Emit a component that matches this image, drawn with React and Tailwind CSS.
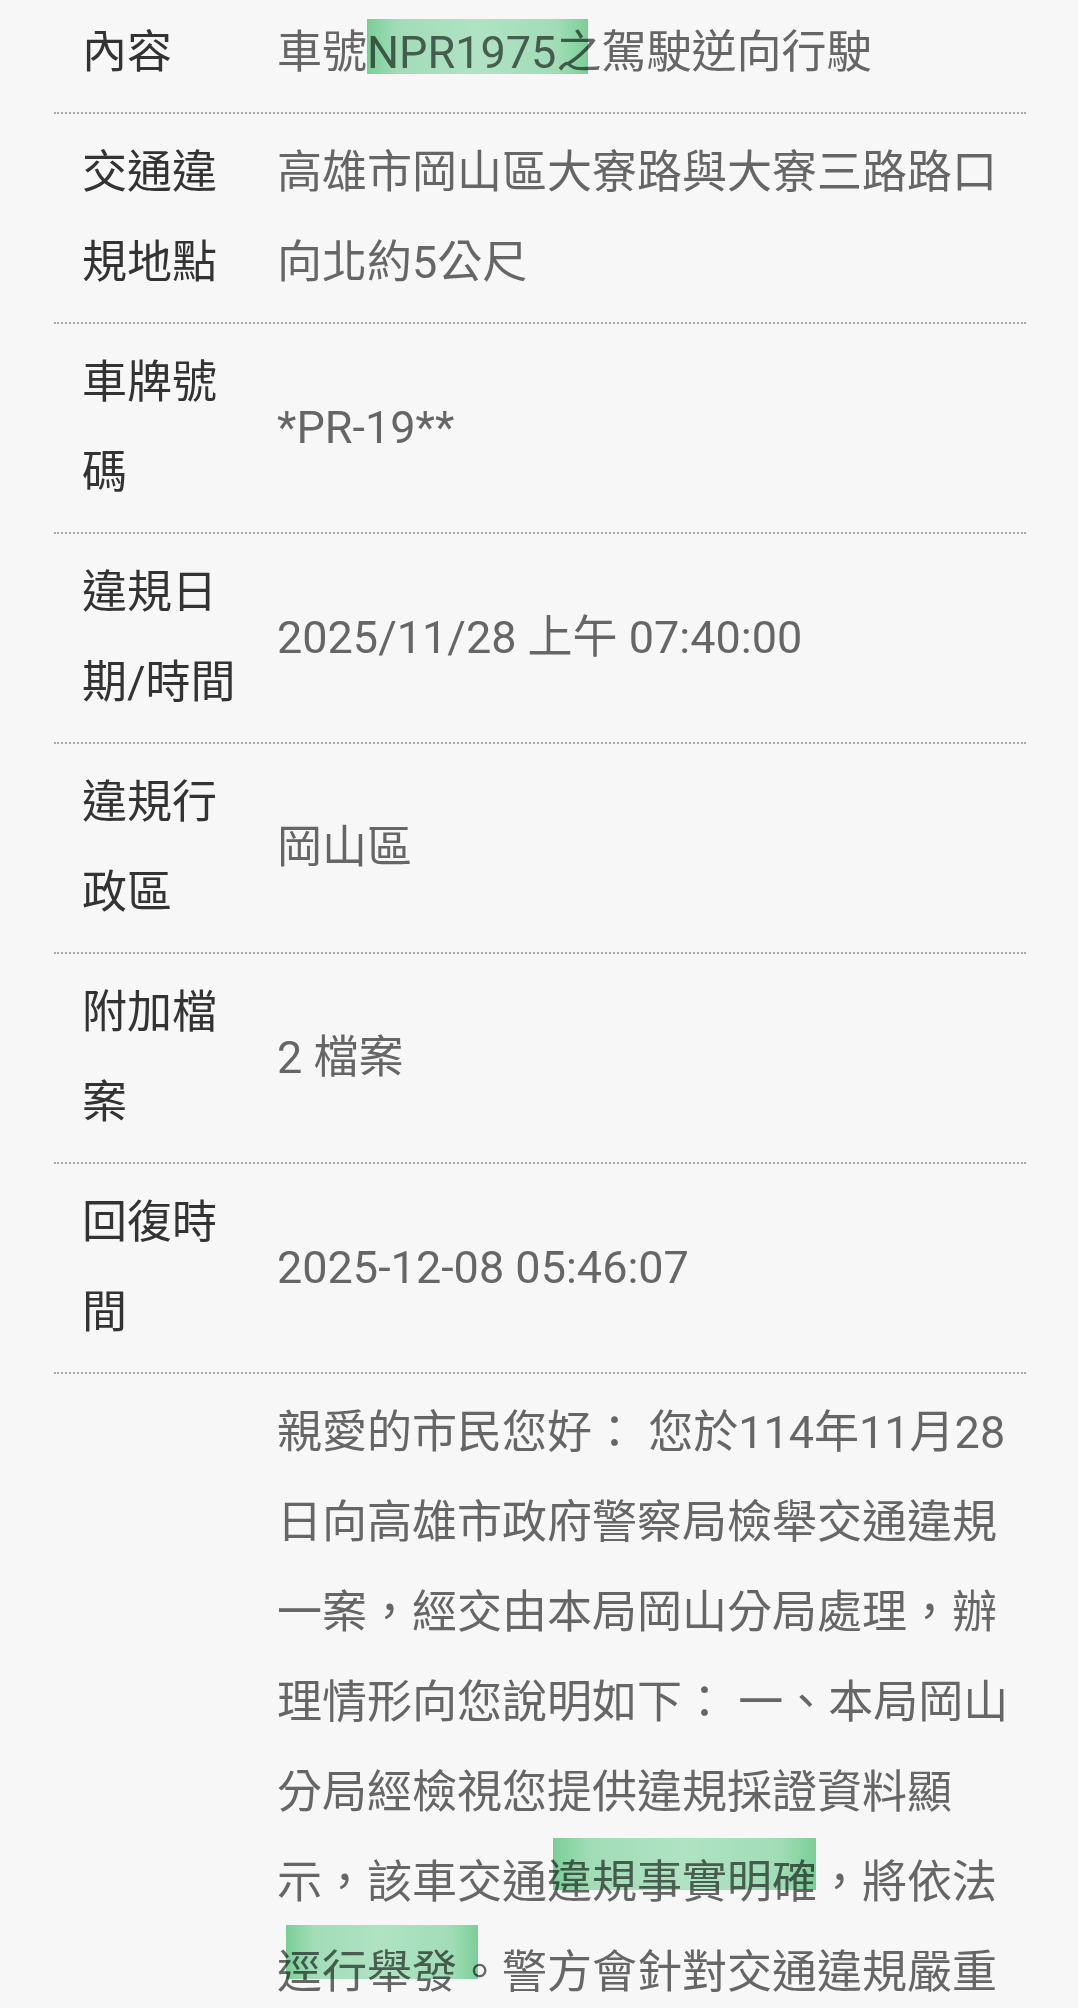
import React from "react";

const FONT = { fontFamily: 'Roboto, "Noto Sans CJK TC", "Noto Sans CJK SC", sans-serif' };

function Mark({ children, box }) {
  return (
    <span className="relative inline-block">
      {children}
      <span className={`pointer-events-none absolute mix-blend-multiply bg-[linear-gradient(90deg,#7fd59c_0%,#a6e4bd_14%,#b6ebca_50%,#a6e4bd_86%,#7fd59c_100%)] ${box}`} />
    </span>
  );
}

function Row({ label, children }) {
  return (
    <div className="grid grid-cols-[223px_1fr] border-b-2 border-dotted border-[#a9a9a9] py-[14px]">
      <div className="pl-[28px] pr-[35px] text-[#333333]">{label}</div>
      <div className="flex items-center pr-[8px] text-[#666666]">
        <div>{children}</div>
      </div>
    </div>
  );
}

export default function App() {
  return (
    <div className="min-h-[2008px] w-full overflow-hidden bg-[#f7f7f7]" style={FONT}>
      <div className="mt-[-6px] pl-[54px] pr-[52px] text-[45px] leading-[90px]">
        <Row label="內容">
          車號
          <Mark box="left-0 top-[11px] h-[55px] w-[221px]">NPR1975之</Mark>
          駕駛逆向行駛
        </Row>
        <Row label="交通違規地點">高雄市岡山區大寮路與大寮三路路口向北約5公尺</Row>
        <Row label="車牌號碼">*PR-19**</Row>
        <Row label="違規日期/時間">2025/11/28 上午 07:40:00</Row>
        <Row label="違規行政區">岡山區</Row>
        <Row label="附加檔案">2 檔案</Row>
        <Row label="回復時間">2025-12-08 05:46:07</Row>
        <div className="grid grid-cols-[223px_1fr] py-[14px]">
          <div />
          <div className="pr-[8px] text-[#666666]">
            親愛的市民您好： 您於114年11月28日向高雄市政府警察局檢舉交通違規一案，經交由本局岡山分局處理，辦理情形向您說明如下： 一、本局岡山分局經檢視您提供違規採證資料顯示，該車交通
            <Mark box="left-[6px] top-0 h-[52px] w-[263px]">違規事實明確</Mark>
            ，將依法
            <Mark box="left-[9px] top-[-3px] h-[54px] w-[192px]">逕行舉發</Mark>
            。警方會針對交通違規嚴重路段加強執法，以維護用路人安全。二、感謝您對交通安全的關心與支持。
          </div>
        </div>
      </div>
    </div>
  );
}
